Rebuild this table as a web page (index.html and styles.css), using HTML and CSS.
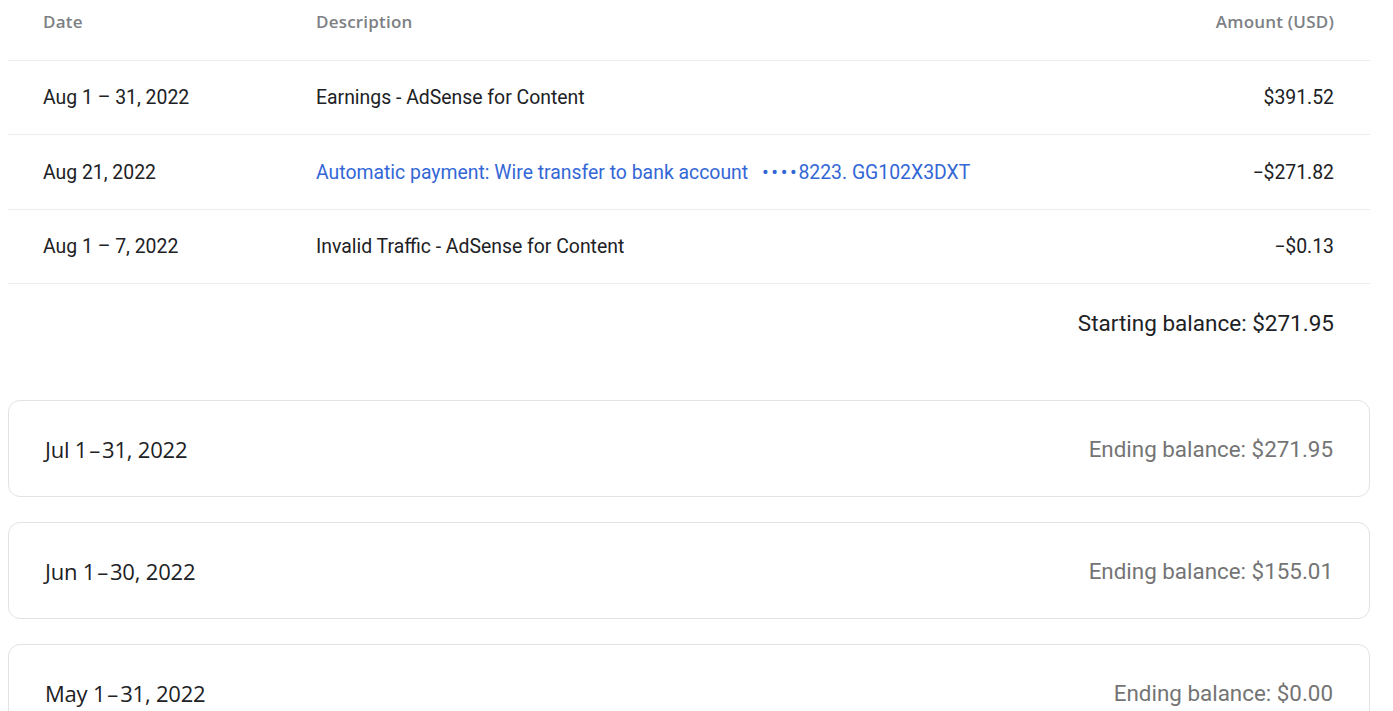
FILE: index.html
```html
<!DOCTYPE html>
<html>
<head>
<meta charset="utf-8">
<link rel="stylesheet" href="styles.css">
</head>
<body>
<div class="page">
  <div class="table">
    <div class="row head">
      <div class="c-date">Date</div>
      <div class="c-desc">Description</div>
      <div class="c-amt">Amount (USD)</div>
    </div>
    <div class="row">
      <div class="c-date">Aug 1 – 31, 2022</div>
      <div class="c-desc">Earnings - AdSense for Content</div>
      <div class="c-amt">$391.52</div>
    </div>
    <div class="row">
      <div class="c-date">Aug 21, 2022</div>
      <div class="c-desc"><a class="link" href="#">Automatic payment: Wire transfer to bank account <span class="dots">••••</span>8223. GG102X3DXT</a></div>
      <div class="c-amt">−$271.82</div>
    </div>
    <div class="row">
      <div class="c-date">Aug 1 – 7, 2022</div>
      <div class="c-desc">Invalid Traffic - AdSense for Content</div>
      <div class="c-amt">−$0.13</div>
    </div>
  </div>
  <div class="starting">Starting balance: $271.95</div>
  <div class="cards">
    <div class="card">
      <div class="period">Jul 1&#8202;–&#8202;31, 2022</div>
      <div class="ending">Ending balance: $271.95</div>
    </div>
    <div class="card">
      <div class="period">Jun 1&#8202;–&#8202;30, 2022</div>
      <div class="ending">Ending balance: $155.01</div>
    </div>
    <div class="card">
      <div class="period">May 1&#8202;–&#8202;31, 2022</div>
      <div class="ending">Ending balance: $0.00</div>
    </div>
  </div>
</div>
</body>
</html>
```

FILE: styles.css
```css
* { box-sizing: border-box; }
html, body { margin: 0; padding: 0; background: #fff; overflow: hidden; }
body { font-family: Roboto, "Liberation Sans", Arial, sans-serif; color: #202124; }
.page { width: 1362px; margin-left: 8px; }
.row {
  display: flex;
  align-items: center;
  height: 74.4px;
  padding: 0 36px 0 35px;
  border-bottom: 1px solid #ececec;
  font-size: 19.4px;
}
.row.head {
  height: 61px;
  padding-bottom: 18px;
  font-family: "Open Sans", Roboto, sans-serif;
  font-size: 17px;
  font-weight: 600;
  letter-spacing: 0.2px;
  color: #7d8084;
}
.c-date { width: 273px; flex: none; }
.c-desc { flex: 1; }
.c-amt { flex: none; text-align: right; }
.link { color: #3367d6; text-decoration: none; }
.dots { letter-spacing: 2.6px; font-size: 20px; line-height: 0; margin-left: 9px; margin-right: -1px; }
.starting {
  text-align: right;
  padding: 26px 36px 0 0;
  height: 116px;
  font-size: 22.5px;
  color: #202124;
}
.cards { display: flex; flex-direction: column; gap: 25px; }
.card {
  display: flex;
  justify-content: space-between;
  align-items: center;
  height: 97px;
  border: 1px solid #e3e3e3;
  border-radius: 12px;
  padding: 0 36px 0 36px;
}
.period {
  font-family: "Open Sans", Inter, sans-serif;
  font-size: 22px;
  letter-spacing: -0.2px;
  color: #202124;
}
.ending { font-size: 22.4px; color: #747474; }
```
